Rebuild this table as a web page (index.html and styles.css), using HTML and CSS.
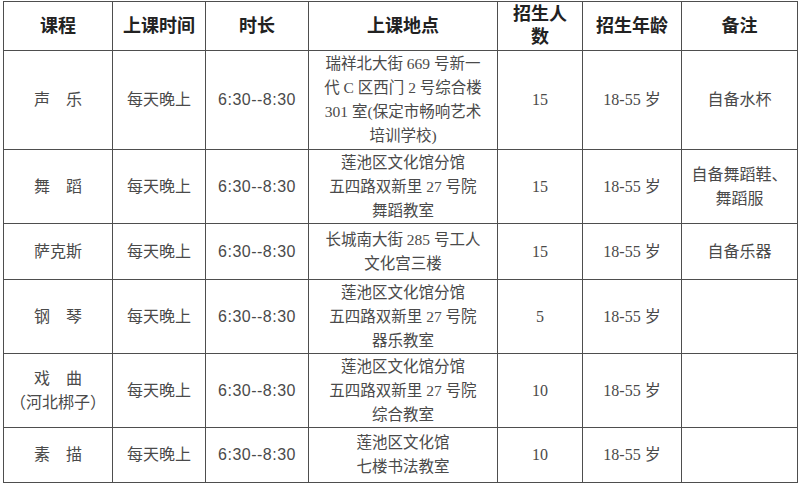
FILE: index.html
```html
<!DOCTYPE html>
<html lang="zh-CN">
<head>
<meta charset="utf-8">
<link rel="stylesheet" href="styles.css">
</head>
<body>
<table class="sched">
  <colgroup>
    <col class="c1"><col class="c2"><col class="c3"><col class="c4"><col class="c5"><col class="c6"><col class="c7">
  </colgroup>
  <tr class="rh">
    <th>课程</th><th>上课时间</th><th>时长</th><th>上课地点</th><th class="two">招生人<br>数</th><th>招生年龄</th><th>备注</th>
  </tr>
  <tr class="r1">
    <td>声　乐</td><td>每天晚上</td><td class="time">6:30--8:30</td>
    <td class="addr">瑞祥北大街 669 号新一<br>代 C 区西门 2 号综合楼<br>301 室(保定市畅响艺术<br>培训学校)</td>
    <td>15</td><td>18-55 岁</td><td>自备水杯</td>
  </tr>
  <tr class="r2">
    <td>舞　蹈</td><td>每天晚上</td><td class="time">6:30--8:30</td>
    <td class="addr">莲池区文化馆分馆<br>五四路双新里 27 号院<br>舞蹈教室</td>
    <td>15</td><td>18-55 岁</td><td>自备舞蹈鞋、<br>舞蹈服</td>
  </tr>
  <tr class="r3">
    <td>萨克斯</td><td>每天晚上</td><td class="time">6:30--8:30</td>
    <td class="addr">长城南大街 285 号工人<br>文化宫三楼</td>
    <td>15</td><td>18-55 岁</td><td>自备乐器</td>
  </tr>
  <tr class="r4">
    <td>钢　琴</td><td>每天晚上</td><td class="time">6:30--8:30</td>
    <td class="addr">莲池区文化馆分馆<br>五四路双新里 27 号院<br>器乐教室</td>
    <td>5</td><td>18-55 岁</td><td></td>
  </tr>
  <tr class="r5">
    <td>戏　曲<br>（河北梆子）</td><td>每天晚上</td><td class="time">6:30--8:30</td>
    <td class="addr">莲池区文化馆分馆<br>五四路双新里 27 号院<br>综合教室</td>
    <td>10</td><td>18-55 岁</td><td></td>
  </tr>
  <tr class="r6">
    <td>素　描</td><td>每天晚上</td><td class="time">6:30--8:30</td>
    <td class="addr">莲池区文化馆<br>七楼书法教室</td>
    <td>10</td><td>18-55 岁</td><td></td>
  </tr>
</table>
</body>
</html>
```
FILE: styles.css
```css
html, body {
  margin: 0;
  padding: 0;
  background: #ffffff;
}
body {
  padding: 1px 0 0 3px;
  font-family: "Liberation Serif", "Noto Sans CJK SC", serif;
  color: #4a4a4a;
}
.sched {
  border-collapse: collapse;
  table-layout: fixed;
  width: 795px;
}
.c1 { width: 109px; }
.c2 { width: 93px; }
.c3 { width: 103px; }
.c4 { width: 189px; }
.c5 { width: 85px; }
.c6 { width: 99px; }
.c7 { width: 116px; }
.sched th, .sched td {
  border: 1px solid #4e4e4e;
  padding: 0;
  text-align: center;
  vertical-align: middle;
  font-size: 16px;
  line-height: 24px;
  font-weight: 400;
}
.sched th {
  font-size: 18px;
  font-weight: 700;
  color: #222;
}
.sched th.two {
  line-height: 23px;
}
.sched td.time {
  font-family: "Liberation Sans", "Noto Sans CJK SC", sans-serif;
  letter-spacing: 0.5px;
}
.sched td.addr {
  font-size: 15.5px;
}
.rh { height: 49px; }
.r1 { height: 99px; }
.r2 { height: 74px; }
.r3 { height: 56px; }
.r4 { height: 74px; }
.r5 { height: 74px; }
.r6 { height: 55px; }
```
